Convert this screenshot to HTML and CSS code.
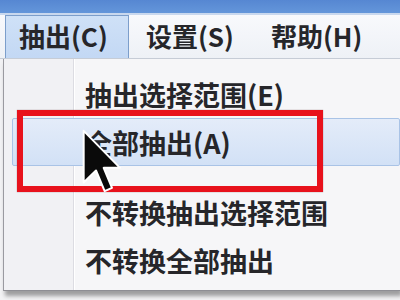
FILE: index.html
```html
<!DOCTYPE html>
<html lang="zh-CN">
<head>
<meta charset="utf-8">
<link rel="stylesheet" href="styles.css">
</head>
<body>
<div class="screen">
  <div class="titlebar"></div>
  <div class="menubar">
    <div class="mb-item active">抽出(C)</div>
    <div class="mb-item">设置(S)</div>
    <div class="mb-item">帮助(H)</div>
  </div>
  <div class="dropdown">
    <div class="gutter"></div>
    <div class="items">
      <div class="item">抽出选择范围(E)</div>
      <div class="item hover">全部抽出(A)</div>
      <div class="sep"></div>
      <div class="item">不转换抽出选择范围</div>
      <div class="item">不转换全部抽出</div>
    </div>
  </div>
  <div class="redbox"></div>
  <svg class="cursor" width="40" height="67" viewBox="0 0 12 20">
    <path d="M0.5 0.5 L0.5 16 L4.2 12.4 L6.8 18.6 L9 17.6 L6.5 11.6 L11.4 11.6 Z" fill="#0a0a0a" stroke="#ffffff" stroke-width="0.6" stroke-linejoin="round"/>
  </svg>
</div>
</body>
</html>
```
FILE: styles.css
```css
html, body {
  margin: 0;
  padding: 0;
  width: 400px;
  height: 300px;
  overflow: hidden;
  background: #f2f2f4;
  font-family: "Noto Sans CJK SC", "Noto Sans", sans-serif;
}
.screen {
  position: relative;
  width: 400px;
  height: 300px;
}
.titlebar {
  height: 13px;
  background: linear-gradient(#5687d2, #6496da);
  border-bottom: 2px solid #c9d8ee;
}
.menubar {
  height: 43px;
  display: flex;
  align-items: stretch;
  padding-left: 5px;
  background: linear-gradient(#f8f9fc, #eef1f6);
  border-bottom: 1px solid #c6ccd6;
}
.mb-item {
  font-size: 26px;
  font-weight: 600;
  color: #26262a;
  display: flex;
  align-items: center;
  padding: 0 13px 3px 13px;
  margin-right: 4px;
}
.mb-item:nth-child(3) { margin-left: 7px; }
.mb-item.active {
  width: 96px;
  background: linear-gradient(#cfe1f7, #c3d8f4);
  border: 1px solid #7c9ecb;
  border-bottom: none;
}
.dropdown {
  position: relative;
  margin-left: 3px;
  height: 231px;
  display: flex;
  background: #f6f6f8;
  border-left: 1px solid #9a9aa0;
  border-bottom: 1px solid #8e8e94;
  box-shadow: 2px 5px 4px rgba(0, 0, 0, 0.35);
}
.gutter {
  width: 69px;
  flex: none;
  background: #f1f1f4;
  border-right: 1px solid #dcdce2;
  box-shadow: 1px 0 0 #ffffff;
}
.items {
  flex: 1;
  padding-top: 11px;
  margin-left: -62px;
  position: relative;
}
.item {
  height: 48px;
  display: flex;
  align-items: center;
  padding-left: 73px;
  font-size: 27px;
  font-weight: 600;
  color: #26262a;
  box-sizing: border-box;
}
.item.hover {
  background: linear-gradient(#e4ecf9, #d2e1f6);
  border: 1px solid #a9c3e6;
  border-radius: 2px;
  padding-left: 72px;
}
.sep {
  height: 22px;
}
.redbox {
  position: absolute;
  left: 17px;
  top: 110px;
  width: 294px;
  height: 70px;
  border: 6px solid #e8121c;
  box-shadow: 0 0 1px rgba(60, 0, 0, 0.5);
}
.cursor {
  position: absolute;
  left: 82px;
  top: 129px;
}
```
